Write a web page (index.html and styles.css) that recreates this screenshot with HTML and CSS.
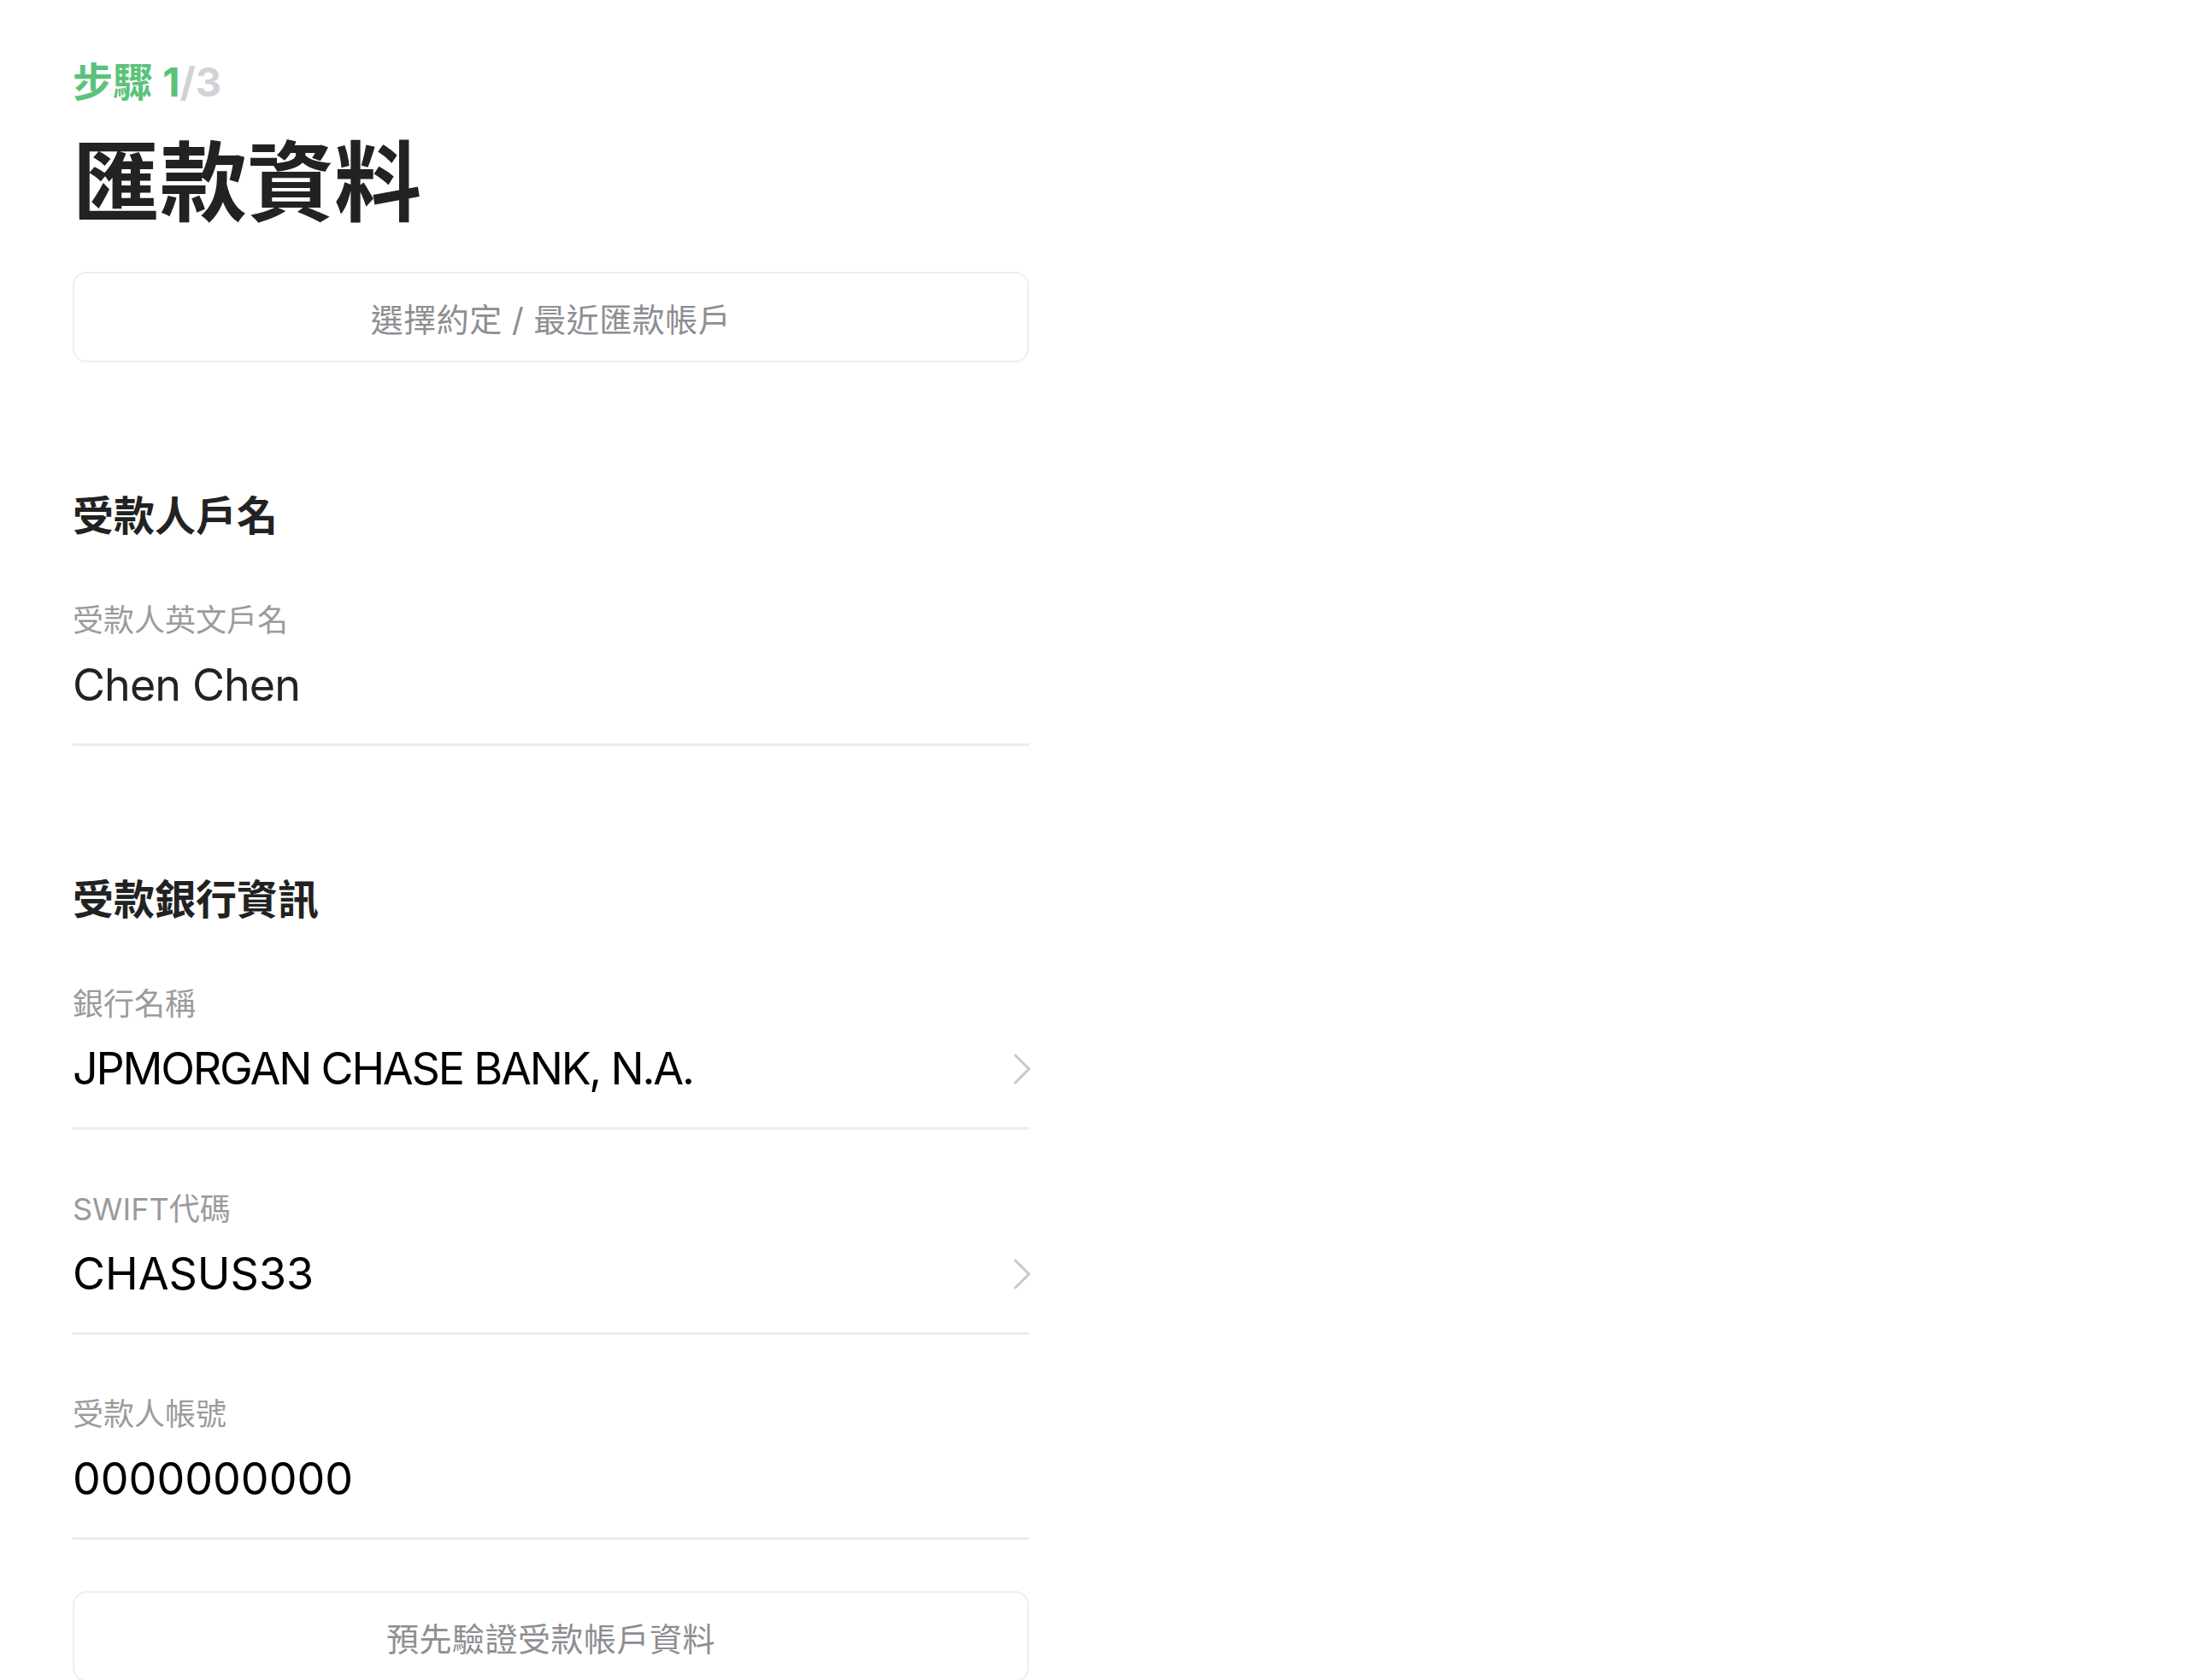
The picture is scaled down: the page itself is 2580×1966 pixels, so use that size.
FILE: index.html
```html
<!DOCTYPE html>
<html lang="zh-Hant">
<head>
    <meta charset="UTF-8">
    <meta name="viewport" content="width=device-width, initial-scale=1.0">
    <title>匯款資料</title>
    <link rel="stylesheet" href="styles.css">
</head>
<body>
    <div class="page">
        <div class="step">步驟 1<span class="step-total">/3</span></div>
        <h1 class="title">匯款資料</h1>
        <button class="outline-btn">選擇約定 / 最近匯款帳戶</button>

        <section class="section">
            <h2 class="section-title">受款人戶名</h2>
            <div class="field">
                <div class="field-label">受款人英文戶名</div>
                <div class="field-value soft">Chen Chen</div>
            </div>
        </section>

        <section class="section">
            <h2 class="section-title">受款銀行資訊</h2>
            <div class="field">
                <div class="field-label">銀行名稱</div>
                <div class="field-value">
                    <span class="tight">JPMORGAN CHASE BANK, N.A.</span>
                    <svg class="chevron" viewBox="0 0 22 38" width="22" height="38"><path d="M3 3 L19 19 L3 35"/></svg>
                </div>
            </div>
            <div class="field">
                <div class="field-label">SWIFT代碼</div>
                <div class="field-value">
                    <span>CHASUS33</span>
                    <svg class="chevron" viewBox="0 0 22 38" width="22" height="38"><path d="M3 3 L19 19 L3 35"/></svg>
                </div>
            </div>
            <div class="field">
                <div class="field-label">受款人帳號</div>
                <div class="field-value">0000000000</div>
            </div>
        </section>

        <button class="outline-btn verify">預先驗證受款帳戶資料</button>
    </div>
</body>
</html>
```

FILE: styles.css
```css
body {
    margin: 0;
    background: #fff;
    font-family: "Inter", "Noto Sans CJK TC", sans-serif;
}
.page {
    width: 1119px;
    padding: 72px 0 0 85px;
}
.step {
    height: 47px;
    font-size: 47px;
    line-height: 47px;
    font-weight: 700;
    color: #5cc27b;
}
.step-total {
    color: #d1d1d6;
}
.title {
    margin: 44px 0 0;
    height: 102px;
    font-size: 102px;
    line-height: 102px;
    font-weight: 700;
    color: #222;
}
.outline-btn {
    display: flex;
    align-items: center;
    justify-content: center;
    width: 100%;
    height: 106px;
    margin-top: 53px;
    padding: 0;
    background: #fff;
    border: 2px solid #eeeef1;
    border-radius: 16px;
    font-family: inherit;
    font-size: 38px;
    letter-spacing: 0.5px;
    color: #8e8e93;
}
.outline-btn.verify {
    margin-top: 60px;
}
.section {
    margin-top: 156px;
}
.section-title {
    margin: 0 0 5px;
    height: 48px;
    font-size: 48px;
    line-height: 48px;
    font-weight: 700;
    color: #222;
}
.field {
    padding: 75px 0 42px;
    border-bottom: 3px solid #ececec;
}
.field-label {
    height: 36px;
    font-size: 36px;
    line-height: 36px;
    color: #9b9b9b;
}
.field-value {
    display: flex;
    align-items: center;
    justify-content: space-between;
    margin-top: 32px;
    height: 52px;
    font-size: 52px;
    line-height: 52px;
    color: #000;
}
.field-value.soft {
    color: #222;
    letter-spacing: -0.9px;
}
.tight {
    letter-spacing: -2.2px;
}
.chevron {
    fill: none;
    stroke: #c7c7cc;
    stroke-width: 3;
    stroke-linecap: round;
    stroke-linejoin: round;
    margin-right: -3px;
}
```
